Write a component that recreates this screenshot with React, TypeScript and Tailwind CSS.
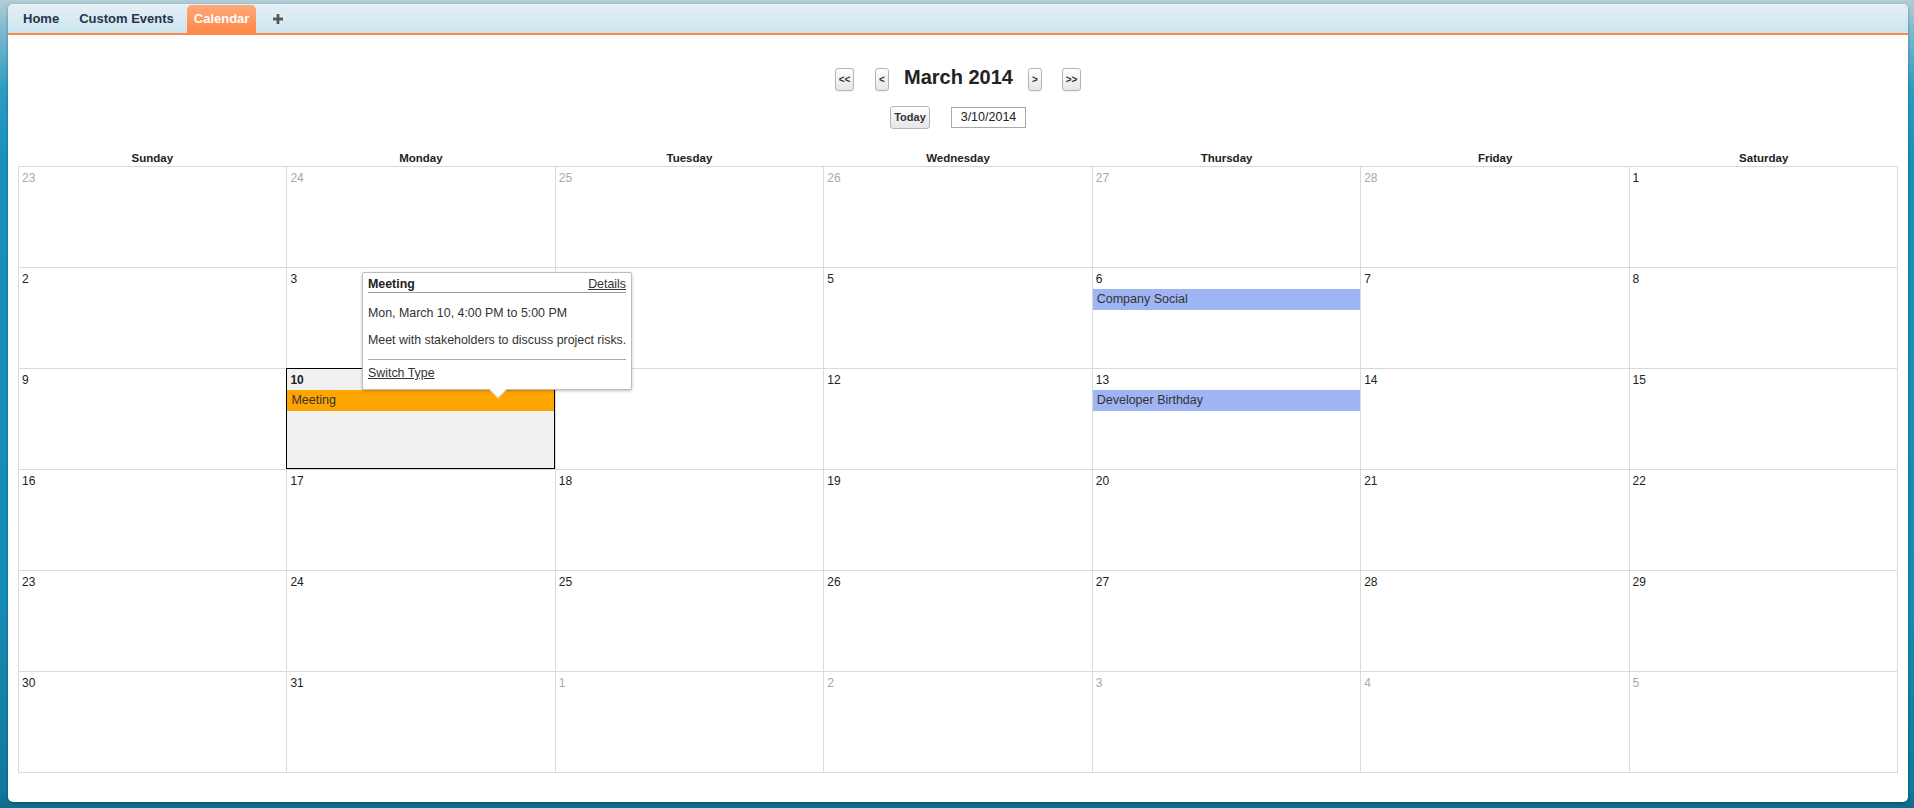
import React from "react";

type Day = { n: number; muted?: boolean };

const weeks: Day[][] = [
  [23, 24, 25, 26, 27, 28].map((n) => ({ n, muted: true })).concat([{ n: 1 }]),
  [2, 3, 4, 5, 6, 7, 8].map((n) => ({ n })),
  [9, 10, 11, 12, 13, 14, 15].map((n) => ({ n })),
  [16, 17, 18, 19, 20, 21, 22].map((n) => ({ n })),
  [23, 24, 25, 26, 27, 28, 29].map((n) => ({ n })),
  [{ n: 30 }, { n: 31 }].concat([1, 2, 3, 4, 5].map((n) => ({ n, muted: true }))),
];

const events: Record<number, { title: string; color: string }> = {
  6: { title: "Company Social", color: "bg-[#9fb4f2]" },
  10: { title: "Meeting", color: "bg-[#ffa500]" },
  13: { title: "Developer Birthday", color: "bg-[#9fb4f2]" },
};

const dayNames = ["Sunday", "Monday", "Tuesday", "Wednesday", "Thursday", "Friday", "Saturday"];

function NavButton({ label, w }: { label: string; w: string }) {
  return (
    <button
      className={`${w} h-[23px] rounded-[3px] border border-[#b5b5b5] bg-gradient-to-b from-white to-[#e6e6e6] text-[10px] font-bold leading-none text-[#333] shadow-[0_1px_0_rgba(0,0,0,0.05)]`}
    >
      {label}
    </button>
  );
}

function Popover() {
  return (
    <div className="absolute left-[344px] top-[106px] z-10 w-[270px] whitespace-nowrap rounded-[2px] border border-[#bdbdbd] bg-white px-[5px] pb-[9px] text-[12.4px] leading-[14px] text-[#333] shadow-[0_1px_3px_rgba(0,0,0,0.25)]">
      <div className="flex items-center justify-between border-b border-[#9a9a9a] pb-[1px] pt-[4px]">
        <span className="font-bold text-[#222]">Meeting</span>
        <span className="underline">Details</span>
      </div>
      <div className="mt-[13px]">Mon, March 10, 4:00 PM to 5:00 PM</div>
      <div className="mt-[13px]">Meet with stakeholders to discuss project risks.</div>
      <div className="mt-[12px] border-t border-[#aaa]" />
      <div className="mt-[6px] underline">Switch Type</div>
      <div className="absolute -bottom-[7px] left-[129px] h-[12px] w-[12px] rotate-45 border-b border-r border-[#cfcfcf] bg-white" />
    </div>
  );
}

function Cell({ day, row }: { day: Day; row: number }) {
  const ev = !day.muted ? events[day.n] : undefined;
  const selected = !day.muted && day.n === 10 && row === 2;
  return (
    <div className={`relative border-b border-r border-[#dadada] ${selected ? "bg-[#f1f1f1]" : "bg-white"}`}>
      {selected && (
        <div className="pointer-events-none absolute -left-px -top-px bottom-0 right-0 border border-black" />
      )}
      <div
        className={`h-[21px] pl-[3px] text-[12px] leading-[22px] ${
          day.muted ? "text-[#a9a9a9]" : "text-[#222]"
        } ${selected ? "font-bold" : ""}`}
      >
        {day.n}
      </div>
      {ev && (
        <div className={`${ev.color} h-[21px] pl-[4px] text-[12.5px] leading-[21px] text-[#333]`}>{ev.title}</div>
      )}
    </div>
  );
}

export default function App() {
  return (
    <div
      className="h-[808px] w-full bg-[linear-gradient(to_bottom,#b4ccd6_0px,#7dbad0_30px,#2c9bc3_90px,#1791bb_160px,#168cb5_600px,#12789c_790px,#0f6b8a_808px)] pb-[6px] pl-[8px] pr-[6px] pt-[4px]"
      style={{ fontFamily: '"Liberation Sans", Arial, sans-serif' }}
    >
      <div className="flex h-full flex-col rounded-[5px] bg-white shadow-[0_1px_3px_rgba(0,0,0,0.35)]">
        {/* tab bar */}
        <div className="flex h-[31px] shrink-0 items-end rounded-t-[5px] border-b-2 border-[#fd8a46] bg-gradient-to-b from-[#e4f0f5] to-[#cde5ee] pl-[8px]">
          <div className="flex h-[28px] items-center px-[7px] text-[13px] font-bold text-[#27344a]">Home</div>
          <div className="ml-[6px] flex h-[28px] items-center px-[7px] text-[13px] font-bold text-[#27344a]">
            Custom Events
          </div>
          <div className="ml-[6px] flex h-[28px] items-center rounded-t-[5px] bg-gradient-to-b from-[#ffa87a] to-[#ff8744] px-[7px] text-[13px] font-bold text-white">
            Calendar
          </div>
          <div className="ml-[17px] flex h-[28px] items-center">
            <svg width="10" height="10" viewBox="0 0 10 10" className="drop-shadow-[0_0_1px_#fff]">
              <path d="M3.6 0h2.8v3.6H10v2.8H6.4V10H3.6V6.4H0V3.6h3.6z" fill="#555" />
            </svg>
          </div>
        </div>

        {/* month nav */}
        <div className="mt-[33px] flex h-[23px] items-center justify-center">
          <NavButton label="<<" w="w-[19px]" />
          <div className="ml-[21px] flex">
            <NavButton label="<" w="w-[14px]" />
          </div>
          <h2 className="mx-[15px] -mt-[4px] text-[20px] font-bold leading-[23px] text-[#222]">March 2014</h2>
          <NavButton label=">" w="w-[14px]" />
          <div className="ml-[20px] flex">
            <NavButton label=">>" w="w-[19px]" />
          </div>
        </div>

        <div className="mt-[15px] flex h-[23px] items-center justify-center gap-[21px]">
          <button className="h-[23px] w-[40px] rounded-[3px] border border-[#b5b5b5] bg-gradient-to-b from-white to-[#e6e6e6] text-[11px] font-bold text-[#333]">
            Today
          </button>
          <div className="flex h-[21px] w-[75px] items-center justify-center border border-[#a9a9a9] text-[12.5px] text-[#222]">
            3/10/2014
          </div>
        </div>

        {/* calendar */}
        <div className="mt-[21px] px-[10px]">
          <div className="grid grid-cols-7">
            {dayNames.map((d) => (
              <div key={d} className="h-[16px] text-center text-[11.5px] font-bold leading-[16px] text-[#222]">
                {d}
              </div>
            ))}
          </div>
          <div className="relative">
            <div className="grid grid-cols-7 auto-rows-[101px] border-l border-t border-[#dadada]">
              {weeks.map((w, r) => w.map((d, i) => <Cell key={`${r}-${i}`} day={d} row={r} />))}
            </div>
            <Popover />
          </div>
        </div>
      </div>
    </div>
  );
}
